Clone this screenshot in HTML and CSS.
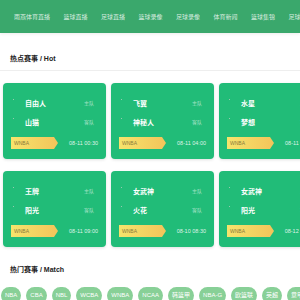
FILE: index.html
```html
<!DOCTYPE html>
<html lang="zh-CN">
<head>
	<meta charset="UTF-8" />
	<title>雨燕体育直播</title>
	<link rel="stylesheet" href="styles.css">
</head>
<body>
	<div class="header">
		<a class="nav" href="#">雨燕体育直播</a>
		<a class="nav" href="#">篮球直播</a>
		<a class="nav" href="#">足球直播</a>
		<a class="nav" href="#">篮球录像</a>
		<a class="nav" href="#">足球录像</a>
		<a class="nav" href="#">体育新闻</a>
		<a class="nav" href="#">篮球集锦</a>
		<a class="nav" href="#">足球集锦</a>
	</div>

	<div class="heading line">热点赛事 / Hot</div>
	<div class="cards">
		<div class="card">
			<div class="team"><span class="name">自由人</span><span class="side">主队</span></div>
			<div class="team"><span class="name">山猫</span><span class="side">客队</span></div>
			<div class="foot"><span class="tag">WNBA</span><span class="time">08-11 00:30</span></div>
		</div>
		<div class="card">
			<div class="team"><span class="name">飞翼</span><span class="side">主队</span></div>
			<div class="team"><span class="name">神秘人</span><span class="side">客队</span></div>
			<div class="foot"><span class="tag">WNBA</span><span class="time">08-11 04:00</span></div>
		</div>
		<div class="card">
			<div class="team"><span class="name">水星</span><span class="side">主队</span></div>
			<div class="team"><span class="name">梦想</span><span class="side">客队</span></div>
			<div class="foot"><span class="tag">WNBA</span><span class="time">08-11 10:00</span></div>
		</div>
		<div class="card">
			<div class="team"><span class="name">王牌</span><span class="side">主队</span></div>
			<div class="team"><span class="name">阳光</span><span class="side">客队</span></div>
			<div class="foot"><span class="tag">WNBA</span><span class="time">08-11 09:00</span></div>
		</div>
		<div class="card">
			<div class="team"><span class="name">女武神</span><span class="side">主队</span></div>
			<div class="team"><span class="name">火花</span><span class="side">客队</span></div>
			<div class="foot"><span class="tag">WNBA</span><span class="time">08-10 08:30</span></div>
		</div>
		<div class="card">
			<div class="team"><span class="name">女武神</span><span class="side">主队</span></div>
			<div class="team"><span class="name">阳光</span><span class="side">客队</span></div>
			<div class="foot"><span class="tag">WNBA</span><span class="time">08-12 03:00</span></div>
		</div>
	</div>

	<div class="heading">热门赛事 / Match</div>
	<div class="pills">
		<a class="pill" href="#">NBA</a>
		<a class="pill" href="#">CBA</a>
		<a class="pill" href="#">NBL</a>
		<a class="pill" href="#">WCBA</a>
		<a class="pill" href="#">WNBA</a>
		<a class="pill" href="#">NCAA</a>
		<a class="pill" href="#">韩篮甲</a>
		<a class="pill" href="#">NBA-G</a>
		<a class="pill" href="#">欧篮联</a>
		<a class="pill" href="#">英超</a>
		<a class="pill" href="#">意甲</a>
	</div>
</body>
</html>
```

FILE: styles.css
```css
body {
	margin: 0;
	font-family: "Liberation Sans", "Noto Sans CJK SC", sans-serif;
	background: #fff;
	color: #222;
	overflow: hidden;
}

a {
	text-decoration: none;
}

.header {
	height: 33px;
	background: #3aa86c;
	display: flex;
	align-items: center;
	gap: 13.5px;
	padding-left: 14px;
	white-space: nowrap;
	box-shadow: 0 1px 3px rgba(0, 0, 0, 0.08);
}

.nav {
	font-size: 6px;
	color: rgba(255, 255, 255, 0.8);
}

.heading {
	padding: 19px 10px 0;
	font-size: 7px;
	line-height: 8px;
	font-weight: bold;
	color: #222;
}

.heading.line {
	padding: 22px 10px 7px;
	border-bottom: 1px solid #eee;
}

.cards {
	display: grid;
	grid-template-columns: repeat(3, 103px);
	gap: 12px 5px;
	padding: 12px 0 0 3px;
	width: 400px;
}

.card {
	background: #21bc78;
	border-radius: 4px;
	padding: 10px 8px;
	box-shadow: 0 1px 3px rgba(0, 0, 0, 0.12);
}

.team {
	height: 19px;
	display: flex;
	align-items: center;
	padding-right: 4px;
}

.team::before {
	content: "";
	width: 1px;
	height: 1px;
	background: rgba(200, 210, 200, 0.7);
	align-self: flex-start;
	margin: 6px 11px 0 2px;
}

.name {
	flex: 1;
	font-size: 7px;
	font-weight: bold;
	color: #fff;
}

.side {
	font-size: 5px;
	color: rgba(255, 255, 255, 0.6);
}

.foot {
	margin-top: 6px;
	height: 12px;
	display: flex;
	align-items: center;
	justify-content: space-between;
}

.tag {
	width: 44px;
	height: 12px;
	line-height: 12px;
	padding-left: 3px;
	font-size: 5px;
	color: #8a7a3c;
	background: linear-gradient(90deg, #f6e46c, #f3c45a);
	clip-path: polygon(0 0, calc(100% - 4px) 0, 100% 50%, calc(100% - 4px) 100%, 0 100%);
}

.time {
	font-size: 5.5px;
	color: rgba(255, 255, 255, 0.85);
}

.pills {
	display: flex;
	gap: 5px;
	margin-top: 13px;
	padding-left: 1px;
	white-space: nowrap;
}

.pill {
	height: 17px;
	line-height: 17px;
	padding: 0 4px;
	border-radius: 9px;
	background: #88d097;
	color: #fff;
	font-size: 6px;
	flex-shrink: 0;
}
```
